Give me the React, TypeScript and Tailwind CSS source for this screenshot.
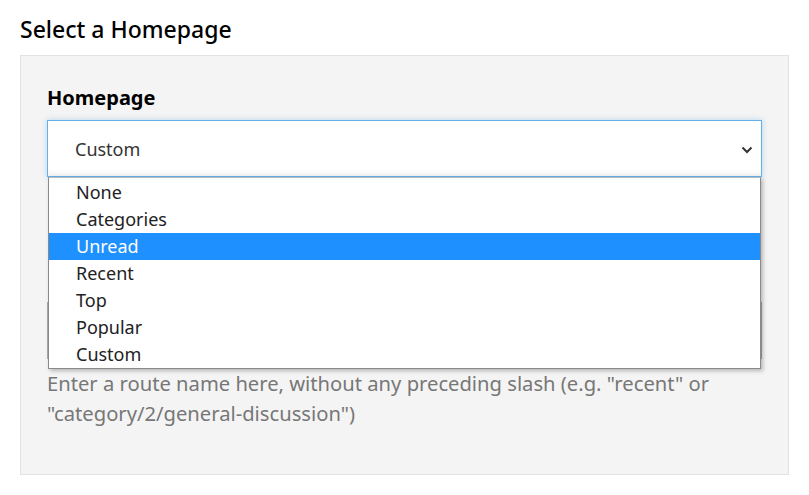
const options = ["None", "Categories", "Unread", "Recent", "Top", "Popular", "Custom"];

export default function App() {
  const selected = "Unread";

  return (
    <div className="w-[809px] h-[495px] bg-white font-['Noto_Sans',sans-serif] text-black">
      <div className="px-5 pt-[14px]">
        <h2 className="text-[23px] leading-[30px] font-medium mb-[11px]">Select a Homepage</h2>

        <div className="w-[769px] h-[420px] bg-[#f4f4f4] border border-[#e2e2e2] px-[26px] pt-[27px]">
          <label className="block text-[20px] leading-[29px] font-bold mb-[8px]">Homepage</label>

          <div className="relative w-[715px]">
            <div className="h-[57px] flex items-center justify-between bg-white border border-[#66afe9] shadow-[0_0_6px_rgba(102,175,233,0.45),inset_0_-6px_6px_-4px_rgba(0,0,0,0.08)] pl-[27px] pr-[8px]">
              <span className="text-[18px] text-[#333] pt-[2px]">Custom</span>
              <svg className="w-[12px] h-[8px] mt-[2px]" viewBox="0 0 12 8" fill="none" stroke="#333" strokeWidth={2}>
                <path d="M1.5 1.5 6 6l4.5-4.5" />
              </svg>
            </div>

            {/* open option list */}
            <ul className="absolute left-[1px] top-[57px] z-10 w-[713px] bg-white border border-[#8a8a8a] border-t-[#bbb] pt-px shadow-[2px_2px_4px_rgba(0,0,0,0.25)]">
              {options.map((o) => (
                <li
                  key={o}
                  className={`h-[27px] leading-[27px] pl-[27px] text-[18px] ${
                    o === selected ? "bg-[#1e90ff] text-white" : "text-[#222]"
                  }`}
                >
                  {o}
                </li>
              ))}
            </ul>
          </div>

          {/* custom route field, covered by the open list */}
          <div className="mt-[92px] h-[24px]" />
          <div className="mt-[9px] h-[57px] w-[715px] bg-white border border-[#aaa]" />

          <p className="mt-[9px] text-[20.2px] leading-[30px] text-[#777]">
            Enter a route name here, without any preceding slash (e.g. "recent" or
            <br />
            "category/2/general-discussion")
          </p>
        </div>
      </div>
    </div>
  );
}
